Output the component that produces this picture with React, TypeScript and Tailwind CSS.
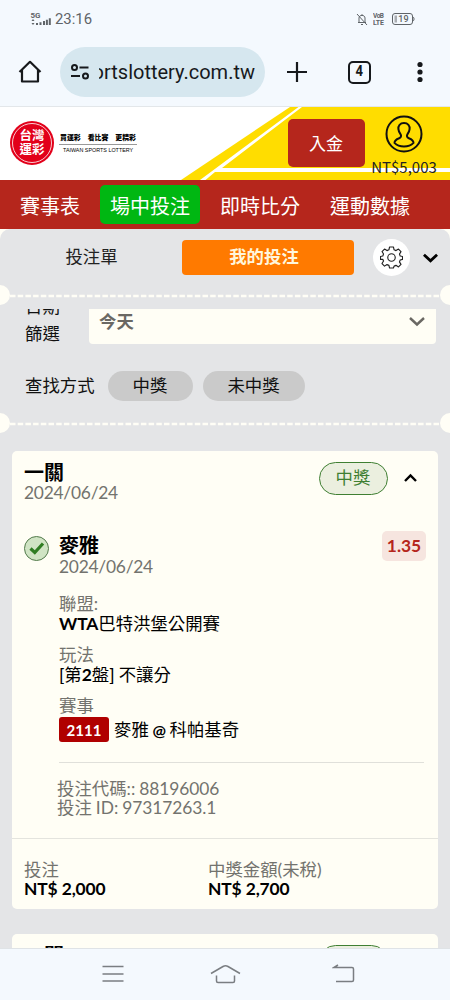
import type { ReactNode } from "react";

const navItems = [
  { label: "賽事表", active: false },
  { label: "場中投注", active: true },
  { label: "即時比分", active: false },
  { label: "運動數據", active: false },
];

function StatusBar() {
  return (
    <div className="flex h-[38px] items-center justify-between pl-[30px] pr-[35px] text-[#5f6468]">
      <div className="flex items-center">
        <svg width="21" height="16" viewBox="0 0 21 16" fill="currentColor">
          <text x="0.500" y="7" fontSize="8" fontWeight="700" fontFamily="Roboto">5G</text>
          <path d="M3 8l1.500 2h-3zM3 14l1.500-2h-3zM6 12h2v2H6zM9.500 11.200h2V14h-2zM13 10h2v4h-2zM15.900 8.800h2V14h-2zM18.800 7.200h2V14h-2z" />
        </svg>
        <span className="ml-1 font-[Roboto] text-[14.900px] leading-5">23:16</span>
      </div>
      <div className="flex items-center">
        <svg width="12" height="13" viewBox="0 0 12 13" fill="none" stroke="currentColor" strokeWidth="1">
          <path d="M1 1l10 11M2 9.500h8M3 9V5c0-3.500 6-3.500 6 0v4M5 11.500h2M6 1.200v1" />
        </svg>
        <svg className="ml-[5px]" width="12" height="14" viewBox="0 0 12 14" fill="currentColor" fontFamily="Roboto" fontWeight="700">
          <text x="0" y="6" fontSize="6.5" textLength="11">VoB</text>
          <text x="0" y="13" fontSize="7" textLength="11">LTE</text>
        </svg>
        <svg className="ml-[7px]" width="23" height="12" viewBox="0 0 23 12">
          <rect x="0.5" y="0.5" width="20" height="11" rx="2.500" fill="none" stroke="currentColor" />
          <path d="M21 4c1.400.3 1.400 3.700 0 4" fill="none" stroke="currentColor" />
          <path d="M2.500 2.500h2.500v7H2.500z" fill="currentColor" opacity="0.5" />
          <text x="6.300" y="9.300" fontSize="9" fontWeight="500" fontFamily="Roboto" fill="currentColor">19</text>
        </svg>
      </div>
    </div>
  );
}

function BrowserBar() {
  return (
    <div className="flex h-[69px] items-center border-b border-[#e3e7ea] pl-[18px] text-[#16191c]">
      <svg className="shrink-0" width="24" height="24" viewBox="0 0 24 24" fill="none" stroke="currentColor" strokeWidth="2.200" strokeLinejoin="round">
        <path d="M1.500 12L12 1.800 22.500 12M4 10v11.500h16V10" />
      </svg>
      <div className="ml-[18px] flex h-[50px] w-[205px] shrink-0 items-center overflow-hidden rounded-full bg-[#d6e7ef] pl-[11px]">
        <svg className="shrink-0" width="18" height="16" viewBox="0 0 18 16" fill="none" stroke="currentColor" strokeWidth="2">
          <circle cx="3.500" cy="3.500" r="2.500" />
          <path d="M8.500 3.500h9M0 12h9" />
          <circle cx="14.500" cy="12" r="2.500" />
        </svg>
        <div className="ml-[10px] flex w-[156px] justify-end overflow-hidden whitespace-nowrap font-[Roboto] text-[20px] leading-7">
          ortslottery.com.tw
        </div>
      </div>
      <svg className="ml-[22px] shrink-0" width="20" height="20" viewBox="0 0 20 20" stroke="currentColor" strokeWidth="2.200">
        <path d="M10 0v20M0 10h20" />
      </svg>
      <div className="ml-[41px] flex h-[23px] w-[23px] shrink-0 items-center justify-center rounded-[5px] border-2 border-current">
        <span className="scale-x-90 font-[Roboto] text-[14.500px] font-bold leading-4">4</span>
      </div>
      <svg className="ml-[46px] shrink-0" width="6" height="22" viewBox="0 0 6 22" fill="currentColor">
        <circle cx="3" cy="3.500" r="2.600" />
        <circle cx="3" cy="11" r="2.600" />
        <circle cx="3" cy="18.500" r="2.600" />
      </svg>
    </div>
  );
}

function Logo() {
  return (
    <div className="flex items-center">
      <div className="flex h-11 w-11 items-center justify-center rounded-full bg-[#e2001a]">
        <div className="flex h-10 w-10 flex-col items-center justify-center rounded-full border border-white/80 pb-[1px] text-[12.500px] font-bold leading-[13.500px] text-white">
          <span>台灣</span>
          <span>運彩</span>
        </div>
      </div>
      <div className="ml-[5px] w-[78px]">
        <div className="flex justify-between border-b border-[#999] pb-[1px] pl-[1px] pr-[1px] text-[6.900px] font-black leading-[11px] text-black">
          <span>買運彩</span>
          <span>看比賽</span>
          <span>更精彩</span>
        </div>
        <div className="whitespace-nowrap pl-[4px] pt-[1px] font-['Liberation_Sans'] text-[5.400px] leading-[8px] text-black">
          TAIWAN SPORTS LOTTERY
        </div>
      </div>
    </div>
  );
}

function SiteHeader() {
  return (
    <header className="relative flex h-[73px] bg-white">
      <svg className="absolute inset-0" width="450" height="73" viewBox="0 0 450 73">
        <path d="M290 0H450V73H181Z" fill="#ffdd00" />
        <path d="M298.500 0H302L222 61H450V65H215L205.500 73H200Z" fill="#fff" />
      </svg>
      <div className="relative flex flex-1 items-start">
        <div className="ml-[10px] mt-[14px]">
          <Logo />
        </div>
        <button className="ml-[150.500px] mt-[12px] h-[48px] w-[77px] rounded-[5px] bg-[#b5261c] pt-[2px] text-[17px] leading-6 text-white">
          入金
        </button>
        <div className="ml-[7px] mt-[8px] flex w-[65px] flex-col items-center">
          <svg width="38" height="38" viewBox="0 0 38 38" fill="none" stroke="#111" strokeWidth="2">
            <circle cx="19" cy="19" r="17.500" />
            <path d="M19 8c-4 0-6 2.800-5.600 6.200.2 2.500 1.400 4 2.300 5.300.8 1.500.3 3-1.500 3.700-3 1.100-4.700 2.300-4.700 4.700 2.300 2.400 5.600 3.600 9.500 3.600s7.200-1.200 9.500-3.600c0-2.400-1.700-3.600-4.700-4.700-1.800-.7-2.300-2.200-1.500-3.700.9-1.300 2.100-2.800 2.300-5.300C25 10.800 23 8 19 8z" />
          </svg>
          <span className="mt-[2px] whitespace-nowrap font-['Noto_Sans_CJK_TC'] text-[15px] leading-6 text-[#222]">NT$5,003</span>
        </div>
      </div>
    </header>
  );
}

function Divider() {
  return (
    <svg className="block shrink-0" width="450" height="20" viewBox="0 0 450 20">
      <path d="M10 11H440" stroke="#fffef6" strokeWidth="2.600" strokeDasharray="5.500 2.200" />
      <circle cx="0" cy="10" r="10" fill="#fffef6" />
      <circle cx="450" cy="10" r="10" fill="#fffef6" />
    </svg>
  );
}

function Field({ label, children }: { label: string; children: ReactNode }) {
  return (
    <div className="h-[51px] leading-[20px]">
      <div className="text-[#73736e]">{label}</div>
      <div className="flex h-[20px] items-center whitespace-pre text-black">{children}</div>
    </div>
  );
}

function BetCard() {
  return (
    <section className="mx-3 h-[458px] w-[425.500px] rounded-[5px] bg-[#fffef5] text-[17.400px]">
      <div className="flex h-[80px] pl-3 pt-[10px]">
        <div className="flex-1">
          <div className="text-[20px] font-bold leading-[22px] text-black">一關</div>
          <div className="tracking-[-0.250px] leading-[20px] text-[#73736e]">2024/06/24</div>
        </div>
        <div className="mt-[1px] flex h-[33px] w-[69px] items-center justify-center rounded-full border-[1.500px] border-[#3f7f32] bg-[#ebefdf] text-[#3f7f32]">
          中獎
        </div>
        <svg className="ml-[16px] mr-[21px] mt-[12px]" width="13" height="9" viewBox="0 0 13 9" fill="none" stroke="#000" strokeWidth="2.400">
          <path d="M1 8l5.500-5.500L12 8" />
        </svg>
      </div>

      <div className="flex h-[307px] pl-3">
        <svg className="mt-[4.500px] shrink-0" width="25" height="25" viewBox="0 0 25 25" fill="none">
          <circle cx="12.500" cy="12.500" r="12" fill="#d0e4c4" stroke="#527a4b" />
          <path d="M6.500 12.500l4.300 4L19 7.500" stroke="#2f7d22" strokeWidth="3.200" />
        </svg>
        <div className="ml-[10px] w-[365px]">
          <div className="flex h-[63px] justify-between">
            <div className="pt-[4px]">
              <div className="text-[20px] font-bold leading-[21px] text-black">麥雅</div>
              <div className="tracking-[-0.250px] leading-[21px] text-[#73736e]">2024/06/24</div>
            </div>
            <div className="-mr-[2px] flex h-[30px] w-[44px] items-center justify-center rounded-[5px] bg-[#f6e5df] text-[17.400px] font-bold text-[#b5261c]">
              1.35
            </div>
          </div>
          <Field label="聯盟:"><b className="tracking-[-0.100px]">WTA</b>巴特洪堡公開賽</Field>
          <Field label="玩法"><b className="font-medium">[</b>第<b>2</b>盤<b className="font-medium">]</b><span className="ml-[4px]">不讓分</span></Field>
          <div className="h-[66px] leading-[20px]">
            <div className="text-[#73736e]">賽事</div>
            <div className="mt-[1px] flex items-center text-black">
              <span className="flex h-[25px] w-[50px] items-center justify-center rounded-[3px] bg-[#b00000] text-[15px] font-bold text-white">2111</span>
              <span className="ml-[5px] whitespace-nowrap [word-spacing:-0.800px]">麥雅 <b className="text-[16px]">@</b> 科帕基奇</span>
            </div>
          </div>
          <div className="border-t border-[#e0e0da] pt-[16px] leading-[19px] text-[#73736e]">
            <div className="-ml-[2px] [word-spacing:-0.400px]">投注代碼:: <span className="tracking-[-0.080px]">88196006</span></div>
            <div className="-ml-[2px] [word-spacing:-0.400px]">投注 ID: <span className="tracking-[-0.100px]">97317263.1</span></div>
          </div>
        </div>
      </div>

      <div className="flex border-t border-[#e4e4de] pl-3 pt-[21px] leading-[19px]">
        <div className="w-[184px]">
          <div className="text-[#73736e]">投注</div>
          <div className="tracking-[-0.120px] font-bold text-black">NT$ 2,000</div>
        </div>
        <div>
          <div className="text-[#73736e]">中獎金額(未稅)</div>
          <div className="tracking-[-0.120px] font-bold text-black">NT$ 2,700</div>
        </div>
      </div>
    </section>
  );
}

function SystemNav() {
  return (
    <div className="flex h-[52px] shrink-0 items-center border-t border-[#dfe3e6] bg-[#f4f9fe] pb-[2px] pl-[102px] text-[#7a7e82]">
      <svg width="22" height="18" viewBox="0 0 22 18" stroke="currentColor" strokeWidth="1.500">
        <path d="M0.500 1.500h21M0.500 9h21M0.500 16h21" />
      </svg>
      <svg className="ml-[86px]" width="31" height="20" viewBox="0 0 31 20" fill="none" stroke="currentColor" strokeWidth="1.500">
        <path d="M1 9.500L13 2.500Q15.500 1 18 2.500L30 9.500M6.500 11.500V17q0 1.500 1.500 1.500h15q1.500 0 1.500-1.500v-5.500" />
      </svg>
      <svg className="ml-[91px]" width="23" height="19" viewBox="0 0 23 19" fill="none" stroke="currentColor" strokeWidth="1.500">
        <path d="M6 1L2 3.500H20q1.500 0 1.500 1.500v11q0 1.500-1.500 1.500H4" />
      </svg>
    </div>
  );
}

export default function App() {
  return (
    <div className="flex h-[1000px] w-[450px] flex-col overflow-hidden bg-[#f4f9fe] font-[Lato,'Noto_Sans_CJK_TC',sans-serif]">
      <StatusBar />
      <BrowserBar />
      <SiteHeader />
      <nav className="flex h-[49px] shrink-0 items-center bg-[#b5261c] pl-[10px] text-[20px] leading-7 text-white">
        {navItems.map((item) => (
          <div
            key={item.label}
            className={
              item.active
                ? "mx-[10px] flex h-[39px] w-[100px] items-center justify-center rounded-[5px] bg-[#00b712] pt-[2px]"
                : "whitespace-nowrap px-[10px] pt-[2px] last:ml-[10px]"
            }
          >
            {item.label}
          </div>
        ))}
      </nav>

      <div className="min-h-0 flex-1 bg-[#fffef6]">
        <main className="h-full overflow-hidden rounded-t-[10px] bg-[#e4e5e7]">
          <div className="flex h-[56px] items-center text-[17.400px]">
            <div className="w-[182px] pl-[1px] pt-[1px] text-center text-[#222]">投注單</div>
            <div className="flex h-[35px] w-[172px] items-center justify-center rounded-[4px] bg-[#ff7a00] pr-[8px] pt-[1px] font-bold text-[#fff6dc]">
              我的投注
            </div>
            <div className="ml-[19px] flex h-[37px] w-[37px] items-center justify-center rounded-full bg-white">
              <svg width="23" height="23" viewBox="0 0 24 24" fill="none" stroke="#222" strokeWidth="1.200" strokeLinejoin="round">
                <path d="M10 1h4l.7 3 2 .8 2.600-1.600 2.600 2.700-1.600 2.600.8 1.900 2.400.6v3l-2.400.6-.8 2 1.600 2.600-2.600 2.600-2.600-1.600-2 .8L14 23h-4l-.7-2.800-2-.8-2.600 1.600-2.600-2.700 1.600-2.600-.8-1.900L.5 14v-3l2.400-.6.8-2-1.600-2.600 2.600-2.600 2.600 1.600 2-.8z" />
                <circle cx="12" cy="12" r="3.900" />
              </svg>
            </div>
            <svg className="ml-[13px] mt-[2px]" width="15" height="10" viewBox="0 0 16 10" fill="none" stroke="#000" strokeWidth="3">
              <path d="M1 1.500l7 6.500 7-6.500" />
            </svg>
          </div>
          <Divider />

          <div className="mt-[4px] flex h-[35px] items-end overflow-hidden pl-[25px] text-[17.400px]">
            <div className="-mb-[3px] w-[64px] leading-[27px] text-[#111]">
              <div>日期</div>
              <div>篩選</div>
            </div>
            <div className="flex h-[35px] w-[347px] items-start justify-between rounded-b-[4px] bg-[#fffef5] pl-[10px] pr-[11px]">
              <span className="leading-[25px] font-bold text-[#6a6863]">今天</span>
              <svg className="mt-[8px]" width="16" height="10" viewBox="0 0 16 10" fill="none" stroke="#6a6863" strokeWidth="2.400">
                <path d="M1 1l7 6.500L15 1" />
              </svg>
            </div>
          </div>

          <div className="mt-[27px] flex h-[30px] items-center pl-[25px] text-[17.400px] text-[#111]">
            <span className="w-[82.500px] pt-[1px]">查找方式</span>
            <span className="flex h-[30px] w-[85px] items-center justify-center rounded-full bg-[#cacaca] pt-[1px]">中獎</span>
            <span className="ml-[10px] flex h-[30px] w-[102px] items-center justify-center rounded-full bg-[#cacaca] pt-[1px]">未中獎</span>
          </div>
          <div className="mb-[18px] mt-[12px]">
            <Divider />
          </div>

          <BetCard />
          <section className="mx-3 mt-[25px] flex h-[80px] w-[425.500px] justify-between rounded-t-[5px] bg-[#fffef5] pl-3 pr-[50px] pt-[10px]">
            <div className="text-[20px] font-bold leading-[22px] text-black">二關</div>
            <div className="mt-[1px] h-[33px] w-[69px] rounded-full border-[1.500px] border-[#3f7f32] bg-[#ebefdf]" />
          </section>
        </main>
      </div>
      <SystemNav />
    </div>
  );
}
